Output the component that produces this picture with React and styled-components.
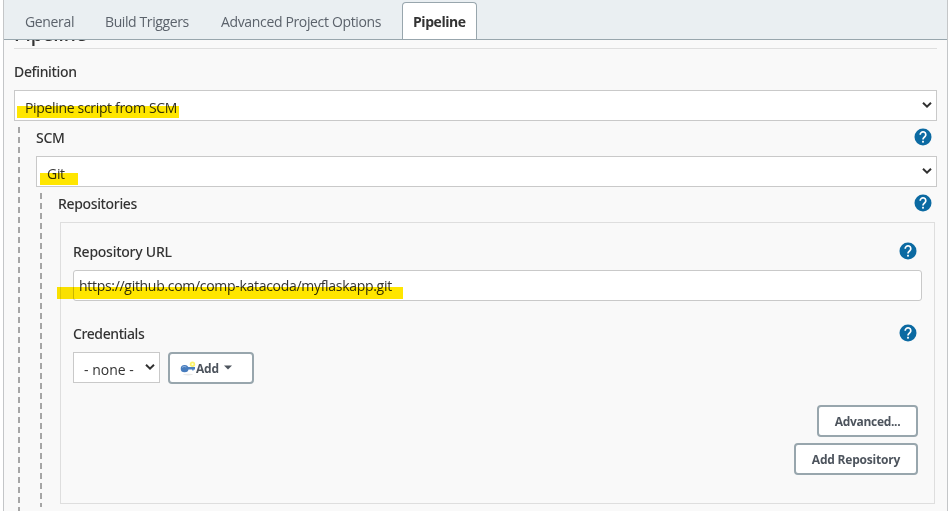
import React from "react";
import styled, { createGlobalStyle } from "styled-components";

const Global = createGlobalStyle`
  *, *::before, *::after { box-sizing: border-box; }
  body {
    margin: 0;
    background: #fff;
    overflow: hidden;
    font-family: "Open Sans", "Noto Sans", sans-serif;
    font-size: 14px;
    color: #333;
  }
`;

const Frame = styled.main`
  width: 945px;
  height: 511px;
  margin-left: 3px;
  border: solid #c4c6c8;
  border-width: 0 1px;
  background: #f9f9f9;
  overflow: hidden;
`;

const TabBar = styled.nav`
  display: flex;
  align-items: flex-end;
  height: 40px;
  padding-left: 10px;
  background: #eaeff2;
  border-bottom: 1px solid #98a6ad;
`;

const Tab = styled.div`
  flex: none;
  width: ${(p) => p.$width}px;
  height: 37px;
  padding-left: 10px;
  margin-left: ${(p) => p.$gap || 0}px;
  line-height: 37px;
  white-space: nowrap;
  letter-spacing: ${(p) => p.$spacing || 0}px;
  color: ${(p) => (p.$active ? "#333" : "#5b626b")};
  font-weight: ${(p) => (p.$active ? 700 : 400)};
  background: ${(p) => (p.$active ? "#fff" : "transparent")};
  border: 1px solid ${(p) => (p.$active ? "#98a6ad" : "transparent")};
  border-bottom: 0;
  border-radius: 4px 4px 0 0;
`;

const Body = styled.div`
  padding: 0 10px;
`;

const HeadingClip = styled.header`
  display: flex;
  align-items: flex-end;
  height: 9px;
  overflow: hidden;
  border-bottom: 1px solid #dedede;
`;

const Heading = styled.h2`
  margin: 0;
  font-size: 19px;
  line-height: 28px;
  font-weight: 600;
  letter-spacing: ${(p) => p.$spacing}px;
`;

const LabelRow = styled.div`
  display: flex;
  justify-content: space-between;
  align-items: flex-start;
  height: ${(p) => p.$height}px;
  padding: ${(p) => p.$top}px 5px 0 0;
`;

const Label = styled.span`
  font-family: "Noto Sans", "Open Sans", sans-serif;
  font-weight: 500;
  line-height: 20px;
  white-space: nowrap;
  letter-spacing: ${(p) => p.$spacing || 0}px;
`;

const SelectBox = styled.div`
  display: flex;
  justify-content: space-between;
  width: ${(p) => (p.$width ? p.$width + "px" : "100%")};
  height: 31px;
  padding: 4px 4px 0 10px;
  background: #fff;
  border: 1px solid #c9c9c9;
  line-height: 26px;
`;

const Chevron = styled.svg`
  flex: none;
  margin-top: 6px;
`;

const TextBox = styled.div`
  height: 31px;
  padding-left: 5px;
  background: #fff;
  border: 1px solid #c9c9c9;
  border-radius: 3px;
  line-height: 30px;
`;

const Value = styled.span`
  position: relative;
  white-space: nowrap;
  letter-spacing: ${(p) => p.$spacing || 0}px;
`;

const Marker = styled.i`
  position: absolute;
  left: ${(p) => p.$left}px;
  top: ${(p) => p.$top}px;
  width: ${(p) => p.$width}px;
  height: 12px;
  background: #ffe600;
  mix-blend-mode: multiply;
`;

const Nested = styled.section`
  margin: 6px 0 0 4px;
  padding-left: 18px;
  height: ${(p) => p.$height}px;
  background: repeating-linear-gradient(#a6a6a6 0 6px, transparent 6px 10px) 0 0 / 2px 100% no-repeat;
`;

const Group = styled.div`
  width: 875px;
  height: 282px;
  margin-left: 2px;
  padding: 17px 12px 0;
  border: 1px solid #dedede;
`;

const Inline = styled.div`
  display: flex;
  gap: 8px;
`;

const Actions = styled.div`
  display: flex;
  flex-direction: column;
  align-items: flex-end;
  gap: 6px;
  margin: 21px 4px 0 0;
`;

const Button = styled.button`
  display: flex;
  align-items: center;
  justify-content: ${(p) => (p.$start ? "flex-start" : "center")};
  width: ${(p) => p.$width}px;
  height: 32px;
  padding: ${(p) => (p.$start ? "1px 0 0 10px" : "1px 0 0")};
  border: 2px solid #98a6ad;
  border-radius: 4px;
  background: #fff;
  color: #4d545d;
  font: 700 12px/28px "Open Sans", "Noto Sans", sans-serif;
  letter-spacing: ${(p) => p.$spacing || 0}px;
  white-space: nowrap;
`;

const Caret = styled.svg`
  margin: 0 0 2px 5px;
`;

function Help() {
  return (
    <svg width="18" height="18" viewBox="0 0 18 18">
      <circle cx="9" cy="9" r="8.5" fill="#0b6aa2" />
      <path d="M6.2 6.8a2.8 2.8 0 1 1 4.7 1.9C9.8 9.8 9 10 9 11.6" fill="none" stroke="#fff" strokeWidth="1.7" />
      <rect x="8.1" y="12.8" width="1.8" height="1.8" fill="#fff" />
    </svg>
  );
}

function Arrow() {
  return (
    <Chevron width="10" height="8" viewBox="0 0 10 8">
      <path d="M1 1.8L5 5.6L9 1.8" fill="none" stroke="#303030" strokeWidth="2" />
    </Chevron>
  );
}

function KeyIcon() {
  return (
    <svg width="16" height="16" viewBox="0 0 16 16">
      <ellipse cx="8" cy="13.6" rx="5" ry="0.8" fill="#e9e9e9" />
      <circle cx="12.5" cy="3.2" r="2.7" fill="#fbf36a" />
      <path d="M7 6h8v2.6h-1.4v1h-1.4v-1H7z" fill="#4a7fc0" />
      <ellipse cx="4.6" cy="7.7" rx="3.9" ry="3.6" fill="#477cbd" />
      <path d="M2 6.4q2-1.8 4.3-.4" fill="none" stroke="#8db2df" />
      <circle cx="12.5" cy="3.2" r="1" fill="#fffde0" />
    </svg>
  );
}

export default function App() {
  return (
    <>
      <Global />
      <Frame>
        <TabBar>
          <Tab $width={80} $spacing={-0.35}>General</Tab>
          <Tab $width={116} $spacing={-0.4}>Build Triggers</Tab>
          <Tab $width={182} $spacing={-0.35}>Advanced Project Options</Tab>
          <Tab $width={75} $gap={10} $active $spacing={-0.45}>Pipeline</Tab>
        </TabBar>
        <Body>
          <HeadingClip><Heading $spacing={-0.1}>Pipeline</Heading></HeadingClip>
          <LabelRow $height={41} $top={13}>
            <Label $spacing={-0.35}>Definition</Label>
          </LabelRow>
          <SelectBox>
            <Value $spacing={-0.33}>Pipeline script from SCM<Marker $left={-8} $top={11} $width={162} /></Value>
            <Arrow />
          </SelectBox>
          <Nested $height={390}>
            <LabelRow $height={29} $top={1}><Label $spacing={-0.3}>SCM</Label><Help /></LabelRow>
            <SelectBox>
              <Value $spacing={-0.3}>Git<Marker $left={-7} $top={12} $width={38} /></Value>
              <Arrow />
            </SelectBox>
            <Nested $height={314}>
              <LabelRow $height={29} $top={1}><Label $spacing={-0.35}>Repositories</Label><Help /></LabelRow>
              <Group>
                <LabelRow $height={30} $top={2}><Label $spacing={-0.25}>Repository URL</Label><Help /></LabelRow>
                <TextBox>
                  <Value $spacing={-0.3}>
                    https://github.com/comp-katacoda/myflaskapp.git
                    <Marker $left={-22} $top={11} $width={346} />
                  </Value>
                </TextBox>
                <LabelRow $height={51} $top={23}><Label $spacing={-0.4}>Credentials</Label><Help /></LabelRow>
                <Inline>
                  <SelectBox $width={87}><Value>- none -</Value><Arrow /></SelectBox>
                  <Button $width={86} $start $spacing={-0.2}>
                    <KeyIcon />
                    Add
                    <Caret width="8" height="5" viewBox="0 0 8 5"><path d="M0 .5h8L4 4.5z" fill="#4d545d" /></Caret>
                  </Button>
                </Inline>
                <Actions>
                  <Button $width={101} $spacing={-0.3}>Advanced...</Button>
                  <Button $width={124} $spacing={-0.2}>Add Repository</Button>
                </Actions>
              </Group>
            </Nested>
          </Nested>
        </Body>
      </Frame>
    </>
  );
}
